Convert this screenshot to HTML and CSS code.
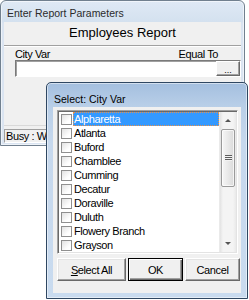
FILE: index.html
```html
<!DOCTYPE html>
<html>
<head>
<meta charset="utf-8">
<link rel="stylesheet" href="styles.css">
</head>
<body>
<div class="screen">
  <div class="win">
    <div class="win-title">Enter Report Parameters</div>
    <div class="win-client">
      <div class="report-title">Employees Report</div>
      <div class="sep"></div>
      <div class="labels"><span>City Var</span><span>Equal To</span></div>
      <div class="field"><div class="field-input"></div><div class="dots-btn">...</div></div>
      <div class="spacer"></div>
      <div class="status"><div class="status-panel"><span class="status-text">Busy : W</span></div></div>
    </div>
  </div>

  <div class="dlg">
    <div class="dlg-title">Select: City Var</div>
    <div class="dlg-client">
      <div class="listbox">
        <div class="items">
          <div class="item sel"><span class="cb"></span><span class="txt">Alpharetta</span></div>
          <div class="item"><span class="cb"></span><span class="txt">Atlanta</span></div>
          <div class="item"><span class="cb"></span><span class="txt">Buford</span></div>
          <div class="item"><span class="cb"></span><span class="txt">Chamblee</span></div>
          <div class="item"><span class="cb"></span><span class="txt">Cumming</span></div>
          <div class="item"><span class="cb"></span><span class="txt">Decatur</span></div>
          <div class="item"><span class="cb"></span><span class="txt">Doraville</span></div>
          <div class="item"><span class="cb"></span><span class="txt">Duluth</span></div>
          <div class="item"><span class="cb"></span><span class="txt">Flowery Branch</span></div>
          <div class="item"><span class="cb"></span><span class="txt">Grayson</span></div>
        </div>
        <div class="vscroll">
          <div class="arrow"><span class="tri-up"></span></div>
          <div class="thumb"><span class="grip"></span></div>
          <div class="track"></div>
          <div class="arrow"><span class="tri-down"></span></div>
        </div>
      </div>
      <div class="buttons">
        <div class="btn btn-all"><span><u>S</u>elect All</span></div>
        <div class="btn btn-ok"><span>OK</span></div>
        <div class="btn btn-cancel"><span>Cancel</span></div>
      </div>
    </div>
  </div>
</div>
</body>
</html>
```

FILE: styles.css
```css
* { box-sizing: border-box; margin: 0; padding: 0; }

html, body {
  width: 249px;
  height: 300px;
  overflow: hidden;
  background: #ffffff;
}

body {
  font-family: "Liberation Sans", Arial, sans-serif;
  font-size: 11px;
  letter-spacing: -0.4px;
  color: #000;
}

.screen {
  position: relative;
  width: 249px;
  height: 300px;
}

/* ---------- outer window ---------- */
.win {
  width: 245px;
  height: 146px;
  border: 1px solid #71808f;
  border-radius: 6px 6px 0 0;
  background: linear-gradient(#dfe9f5, #d4e1ef 21px, #dae4f1 22px, #dae4f1);
  box-shadow: inset 0 0 0 1px rgba(255,255,255,0.55);
  padding: 0 3px 2px 3px;
  display: flex;
  flex-direction: column;
}

.win-title {
  height: 21px;
  padding: 5px 0 0 3px;
  line-height: 14px;
  font-size: 10.5px;
  letter-spacing: 0;
  color: #2b2b2b;
  white-space: nowrap;
}

.win-client {
  flex: 1;
  background: #f0f0f0;
  display: flex;
  flex-direction: column;
  overflow: hidden;
}

.report-title {
  margin-top: 3px;
  line-height: 16px;
  font-size: 13px;
  letter-spacing: 0;
  text-align: center;
}

.sep {
  margin-top: 4px;
  height: 2px;
  border-top: 1px solid #a0a0a0;
  border-bottom: 1px solid #ffffff;
}

.labels {
  display: flex;
  justify-content: space-between;
  line-height: 12px;
  padding: 1px 23px 0 11px;
}

.field {
  margin: 0 0 0 11px;
  height: 17px;
  display: flex;
  border: 1px solid;
  border-color: #7a7a7a #ffffff #ffffff #7a7a7a;
  box-shadow: inset 1px 1px 0 #a0a0a0;
  background: #ffffff;
}

.field-input { flex: 1; }

.dots-btn {
  width: 24px;
  height: 15px;
  border: 1px solid;
  border-color: #ffffff #696969 #696969 #ffffff;
  box-shadow: inset -1px -1px 0 #a0a0a0;
  background: #f0f0f0;
  font-size: 9px;
  letter-spacing: 0;
  line-height: 16px;
  text-align: center;
}

.spacer { flex: 1; }

.status {
  height: 18px;
  border-top: 1px solid #d9d9d9;
  padding-top: 3px;
}

.status-panel {
  height: 14px;
  border: 1px solid;
  border-color: #a0a0a0 #ffffff #ffffff #a0a0a0;
  padding-left: 1px;
  line-height: 12px;
  white-space: nowrap;
}

.status-text {
  display: inline-block;
  max-width: 40px;
  overflow: hidden;
  vertical-align: top;
}

/* ---------- select dialog ---------- */
.dlg {
  position: absolute;
  left: 46px;
  top: 82px;
  width: 202px;
  height: 217px;
  border: 1px solid #2f4762;
  border-radius: 5px 5px 0 0;
  background: linear-gradient(#a4bfdf, #b9cfe8 24px, #c6d8ed 60px, #c9dbef);
  box-shadow: inset 0 0 0 1px rgba(255,255,255,0.5);
  padding: 0 6px 5px 6px;
  display: flex;
  flex-direction: column;
}

.dlg-title {
  height: 24px;
  padding: 9px 0 0 1px;
  line-height: 14px;
  font-size: 10.5px;
  letter-spacing: 0;
  color: #000;
  white-space: nowrap;
}

.dlg-client {
  flex: 1;
  background: #f0f0f0;
  padding: 3px 0 0 4px;
  display: flex;
  flex-direction: column;
}

.listbox {
  width: 181px;
  height: 144px;
  border: 1px solid;
  border-color: #a0a0a0 #ffffff #ffffff #a0a0a0;
  box-shadow: inset 1px 1px 0 #696969, inset -1px -1px 0 #e3e3e3;
  padding: 1px;
  background: #ffffff;
  display: flex;
}

.items {
  width: 160px;
  display: flex;
  flex-direction: column;
}

.item {
  height: 14px;
  display: flex;
  align-items: center;
  padding-left: 2px;
}

.cb {
  width: 11px;
  height: 11px;
  border: 1px solid #8f8f8f;
  background: linear-gradient(135deg, #e2e2e2, #ffffff 70%);
  margin-right: 1px;
  flex: none;
}

.txt {
  line-height: 14px;
  padding-left: 1px;
  white-space: nowrap;
}

.item.sel .txt {
  flex: 1;
  height: 14px;
  line-height: 12px;
  padding-left: 0;
  background: #3399ff;
  color: #ffffff;
  border: 1px dotted #e8914a;
}

.vscroll {
  width: 17px;
  display: flex;
  flex-direction: column;
  background: linear-gradient(to right, #e3e3e3, #f4f4f4 3px, #f4f4f4 13px, #e9e9e9);
  border-left: 1px solid #eaeaea;
}

.arrow {
  height: 17px;
  display: flex;
  align-items: center;
  justify-content: center;
}

.tri-up {
  width: 0;
  height: 0;
  border-left: 3px solid transparent;
  border-right: 3px solid transparent;
  border-bottom: 3px solid #555;
}

.tri-down {
  width: 0;
  height: 0;
  border-left: 3px solid transparent;
  border-right: 3px solid transparent;
  border-top: 3px solid #555;
}

.thumb {
  height: 58px;
  margin: 0 1px 0 1px;
  border: 1px solid #9a9a9a;
  border-radius: 2px;
  background: linear-gradient(to right, #f6f6f6, #e9e9e9 50%, #dadada);
  box-shadow: inset 0 0 0 1px rgba(255,255,255,0.7);
  display: flex;
  align-items: center;
  justify-content: center;
}

.grip {
  width: 7px;
  height: 6px;
  background: repeating-linear-gradient(#5d5d5d 0, #5d5d5d 1px, #f2f2f2 1px, #f2f2f2 2px);
}

.track { flex: 1; }

.buttons {
  margin-top: 4px;
  display: flex;
  gap: 2px;
}

.btn {
  height: 23px;
  border: 1px solid;
  border-color: #ffffff #696969 #696969 #ffffff;
  box-shadow: inset -1px -1px 0 #a0a0a0, inset 1px 1px 0 #e3e3e3;
  background: #f0f0f0;
  display: flex;
  align-items: center;
  justify-content: center;
  line-height: 12px;
}

.btn-all { width: 69px; }
.btn-ok {
  width: 55px;
  border-color: #000;
  box-shadow: inset 1px 1px 0 #ffffff, inset -1px -1px 0 #696969, inset -2px -2px 0 #a0a0a0;
}
.btn-cancel { width: 55px; }
```
